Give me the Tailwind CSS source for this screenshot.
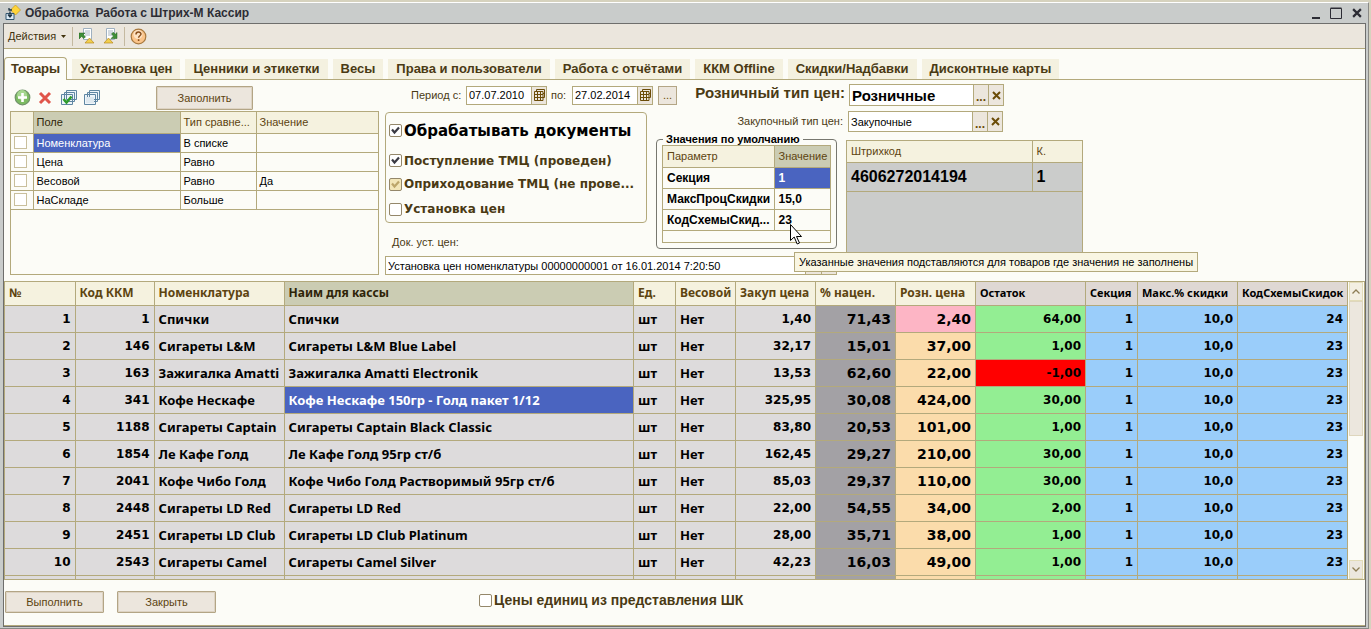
<!DOCTYPE html>
<html lang="ru">
<head>
<meta charset="utf-8">
<title>Обработка Работа с Штрих-М Кассир</title>
<script src="https://cdn.jsdelivr.net/npm/@tailwindcss/browser@4"></script>
</head>
<body class="h-screen overflow-hidden bg-[#d6d2be] pt-[2px] pr-[2px] font-['Liberation_Sans',sans-serif] text-[11px] leading-[14px] text-[#4a3a14]">
<svg class="hidden">
  <symbol id="tick" viewBox="0 0 13 13"><path d="M3 5.5 L5.5 8.5 L10 3.5" fill="none" stroke="currentColor" stroke-width="2.2"/></symbol>
  <symbol id="calendar" viewBox="0 0 12 12"><path d="M3.500 2V.5h8v8H10M2 2.500h8v9H1.500v-9zM1.500 5.500h8.500M1.500 8.500h8.500M4.500 2.500v9M7.500 2.500v9M10 4.500h1.500" fill="none" stroke="currentColor"/></symbol>
  <symbol id="cross" viewBox="0 0 9 9"><path d="M1 1l7 7M8 1l-7 7" stroke="currentColor" stroke-width="2"/></symbol>
</svg>
<div class="flex h-full flex-col border-t border-r border-b border-t-white border-r-[#8a8a86] border-b-[#8a8a86] bg-[#c9cccb] pr-[2px] pb-[1px] pl-[3px]">

  <header class="flex h-5 shrink-0 items-center pr-1 pl-[2px] text-[#2c2c34]">
    <svg class="mr-1 size-4" viewBox="0 0 16 16"><path d="M10.500 0l5 5-5 5-5-5z" fill="#ffd53a" stroke="#c99a18" stroke-width=".7"/><path d="M1 8.500v6h8v-6z" fill="#dcebf7" stroke="#33566e"/><path d="M4 3v2M7 5H3.500M5 6.500v5M3 9.500l2 2.500 2-2.500" fill="none" stroke="#1d3444" stroke-width="1.300"/></svg>
    <h1 class="text-[12px] font-bold whitespace-pre">Обработка  Работа с Штрих-М Кассир</h1>
    <div class="ml-auto flex items-center gap-2">
      <button aria-label="Свернуть"><svg class="size-3" viewBox="0 0 12 12"><path d="M2 11h8" stroke="currentColor" stroke-width="2"/></svg></button>
      <button aria-label="Развернуть"><svg class="size-3" viewBox="0 0 12 12"><path d="M.5 1.500h11v10H.5zM.5 1h11" fill="none" stroke="currentColor"/></svg></button>
      <button aria-label="Закрыть окно" class="pl-[2px]"><svg class="size-[10px]"><use href="#cross"/></svg></button>
    </div>
  </header>

  <div class="flex min-h-0 flex-1 flex-col border border-[#6e6e6c] bg-[#fcfcf7]">
    <div class="flex h-[25px] shrink-0 items-center border-b border-[#b3a97c] bg-[#ebe6dd] pl-1">
      <button class="flex items-center gap-[5px] text-[#40320c]">Действия <svg class="h-[3px] w-[5px]" viewBox="0 0 5 3"><path d="M0 0h5L2.500 3z" fill="currentColor"/></svg></button>
      <span class="mx-[6px] h-[19px] w-px bg-[#c4b9a0]"></span>
      <button aria-label="Загрузить" class="mr-2"><svg class="size-4" viewBox="0 0 16 16"><path d="M4.500.5h8v11h-8z" fill="#fff" stroke="#9fb0c0"/><path d="M6 3h5M6 5h5M6 7h5" stroke="#a9b5c1"/><path d="M0 5h6L4.300 6.700l2.200 2.100-1.700 1.700-2.200-2.100L0 11z" fill="#3f8f37" stroke="#215f20" stroke-width=".5"/><path d="M6 15l4.500-5L15 15z" fill="#f2cf4e" stroke="#b88a22" stroke-width=".7"/></svg></button>
      <button aria-label="Выгрузить"><svg class="size-4" viewBox="0 0 16 16"><path d="M3.500.5h8v11h-8z" fill="#fff" stroke="#9fb0c0"/><path d="M5 3h5M5 5h5M5 7h5" stroke="#a9b5c1"/><path d="M8 10.500h6v-6l-1.700 1.700-2-2-1.800 1.800 2 2z" fill="#3f8f37" stroke="#215f20" stroke-width=".5"/><path d="M1 15l4.500-5L10 15z" fill="#f2cf4e" stroke="#b88a22" stroke-width=".7"/></svg></button>
      <span class="mx-[5px] h-[19px] w-px bg-[#c4b9a0]"></span>
      <button aria-label="Справка"><svg class="size-[17px]" viewBox="0 0 17 17"><circle cx="8.500" cy="8.500" r="7.300" fill="#fac48a" stroke="#a8793f" stroke-width="1.200"/><circle cx="8" cy="6.500" r="4.500" fill="#fde3c4"/><path d="M6 6.500c0-3.200 5-3.200 5-.4 0 1.600-2.400 1.700-2.400 3.600M8.600 11.300v1.800" fill="none" stroke="#8a4f1c" stroke-width="1.500"/></svg></button>
    </div>

    <nav class="mt-2 flex h-[23px] shrink-0 items-end gap-[5px] border-b border-[#b3a97c] text-[13px] font-bold whitespace-nowrap">
      <a href="#" class="-mb-px flex h-[23px] items-center rounded-t-sm border border-b-0 border-[#b3a97c] bg-[#fcfcf7] px-[6px]">Товары</a>
      <a href="#" class="flex h-5 items-center bg-[#f4f1e0] px-2">Установка цен</a>
      <a href="#" class="flex h-5 items-center bg-[#f4f1e0] px-2">Ценники и этикетки</a>
      <a href="#" class="flex h-5 items-center bg-[#f4f1e0] px-2">Весы</a>
      <a href="#" class="flex h-5 items-center bg-[#f4f1e0] px-2">Права и пользователи</a>
      <a href="#" class="flex h-5 items-center bg-[#f4f1e0] px-2">Работа с отчётами</a>
      <a href="#" class="flex h-5 items-center bg-[#f4f1e0] px-2">ККМ Offline</a>
      <a href="#" class="flex h-5 items-center bg-[#f4f1e0] px-2">Скидки/Надбавки</a>
      <a href="#" class="flex h-5 items-center bg-[#f4f1e0] px-2">Дисконтные карты</a>
    </nav>

    <main class="flex h-[201px] shrink-0 pt-1 pb-[6px] pl-[6px]">
      <!-- Отбор -->
      <section class="mr-[6px] flex w-[369px] flex-col">
        <div class="flex h-[27px] shrink-0 items-center pl-1">
          <button aria-label="Добавить" class="mr-[7px]"><svg class="size-[17px]" viewBox="0 0 17 17"><circle cx="8.500" cy="8.500" r="7.300" fill="#7cbb62" stroke="#71936a" stroke-width="1.200"/><circle cx="8" cy="6" r="5" fill="#a5d68f"/><path d="M8.500 4v9M4 8.500h9" stroke="#fff" stroke-width="2.600"/></svg></button>
          <button aria-label="Удалить" class="mr-[9px]"><svg class="size-[14px]" viewBox="0 0 14 14"><path d="M2 2l10 10M12 2L2 12" stroke="#e0554a" stroke-width="3"/></svg></button>
          <button aria-label="Отметить все" class="mr-[7px]"><svg class="size-4" viewBox="0 0 16 16"><path d="M5.500.5h10v9h-10zM3.500 2.500h10v9h-10zM.5 4.500h11v10H.5z" fill="#eef5fa" stroke="#5f86a2"/><path d="M2.500 9l3 3.500 5-6" fill="none" stroke="#2f9c2c" stroke-width="2.600"/></svg></button>
          <button aria-label="Снять отметки"><svg class="size-4" viewBox="0 0 16 16"><path d="M5.500.5h10v9h-10zM3.500 2.500h10v9h-10zM.5 4.500h11v10H.5z" fill="#eef5fa" stroke="#5f86a2"/><path d="M2 7h8v6H2z" fill="#dfe9ef"/></svg></button>
          <button class="ml-14 h-6 w-[97px] rounded-[1px] border border-[#b3a585] bg-[#ece6dd] text-[#5d4410] shadow-[inset_0_0_0_1px_#ddd3c3]">Заполнить</button>
        </div>
        <div class="flex-1 border border-[#b3a97c]">
          <table class="w-full table-fixed border-collapse text-black [&_td]:h-[19px] [&_td]:border-b [&_td]:border-[#b3a97c] [&_td]:p-0 [&_td]:pl-[3px] [&_td:not(:last-child)]:border-r [&_th]:h-[21px] [&_th]:border-b [&_th]:border-[#b3a97c] [&_th]:p-0 [&_th]:pl-[3px] [&_th]:text-left [&_th]:font-normal [&_th:not(:last-child)]:border-r [&_input]:block [&_input]:size-[13px] [&_input]:appearance-none [&_input]:border [&_input]:border-[#c9bf9c] [&_input]:bg-white">
            <thead class="bg-[#f5f2df] text-[#5d4410]"><tr>
              <th class="w-[22px]"></th><th class="w-[147px] bg-[#cbccb3] text-[#2f2408]">Поле</th><th class="w-[76px]">Тип сравне...</th><th>Значение</th></tr></thead>
            <tbody>
              <tr><td><input type="checkbox" aria-label="Номенклатура"></td><td class="bg-[#4a64c0] text-white">Номенклатура</td><td>В списке</td><td></td></tr>
              <tr><td><input type="checkbox" aria-label="Цена"></td><td>Цена</td><td>Равно</td><td></td></tr>
              <tr><td><input type="checkbox" aria-label="Весовой"></td><td>Весовой</td><td>Равно</td><td>Да</td></tr>
              <tr><td><input type="checkbox" aria-label="НаСкладе"></td><td>НаСкладе</td><td>Больше</td><td></td></tr>
            </tbody>
          </table>
        </div>
      </section>

      <!-- Период, документы и значения по умолчанию -->
      <section class="mr-[9px] flex w-[452px] flex-col">
        <div class="flex flex-1">
          <div class="flex w-[262px] flex-col">
            <div class="flex h-[22px] items-center pl-[26px] whitespace-nowrap [&>*]:shrink-0">
              <label for="from" class="mr-1 w-[51px]">Период с:</label>
              <input id="from" value="07.07.2010" class="h-[19px] w-[66px] border border-[#b3a97c] bg-white pl-[2px] text-[11px] text-black">
              <button aria-label="Выбрать начало" class="flex h-[19px] w-[15px] items-center justify-center border border-l-0 border-[#b3a97c] bg-[#ece6dd] text-[#6b4c08]"><svg class="size-3 shrink-0"><use href="#calendar"/></svg></button>
              <label for="to" class="mr-1 ml-1 w-[17px]">по:</label>
              <input id="to" value="27.02.2014" class="h-[19px] w-[66px] border border-[#b3a97c] bg-white pl-[2px] text-[11px] text-black">
              <button aria-label="Выбрать конец" class="flex h-[19px] w-[15px] items-center justify-center border border-l-0 border-[#b3a97c] bg-[#ece6dd] text-[#6b4c08]"><svg class="size-3 shrink-0"><use href="#calendar"/></svg></button>
              <button aria-label="Выбрать период" class="ml-[5px] h-[19px] w-[19px] border border-[#b3a585] bg-[#ece6dd] leading-3 text-[#6b4c08]">...</button>
            </div>
            <div class="mt-[6px] flex h-[111px] flex-col rounded-[4px] border border-[#b3a97c] pt-2 pl-[3px] font-['DejaVu_Sans',sans-serif] text-[12px] font-bold whitespace-nowrap [&_label]:flex [&_label]:items-center [&_label]:gap-[2px] [&_label>span]:grid [&_input]:col-start-1 [&_input]:row-start-1 [&_input]:size-[13px] [&_input]:appearance-none [&_input]:rounded-[2px] [&_input]:border [&_input]:border-[#94876a] [&_svg]:col-start-1 [&_svg]:row-start-1 [&_svg]:size-[13px]">
              <label class="h-5 text-[15px] text-black"><span><input type="checkbox" checked class="bg-white"><svg class="text-[#3a3a44]"><use href="#tick"/></svg></span>Обрабатывать документы</label>
              <label class="mt-2 h-6"><span><input type="checkbox" checked class="bg-white"><svg class="text-[#3a3a44]"><use href="#tick"/></svg></span>Поступление ТМЦ (проведен)</label>
              <label class="h-6"><span><input type="checkbox" checked disabled class="bg-[#f3e6b8]"><svg class="text-[#bda66a]"><use href="#tick"/></svg></span>Оприходование ТМЦ (не прове...</label>
              <label class="h-[26px]"><span><input type="checkbox" class="bg-white"></span>Установка цен</label>
            </div>
            <label for="doc" class="mt-3 pl-[7px]">Док. уст. цен:</label>
          </div>
          <div class="ml-[9px] flex flex-1 flex-col">
            <label for="retail" class="-mr-[8px] h-[22px] self-end text-[15px] leading-[18px] font-bold whitespace-nowrap">Розничный тип цен:</label>
            <label for="purchase" class="-mr-[6px] mt-[8px] h-[15px] self-end whitespace-nowrap">Закупочный тип цен:</label>
            <fieldset class="mt-[4px] h-[116px] rounded-[4px] border border-[#77776f] px-[5px] text-black">
              <legend class="ml-px px-[3px] text-[11px] leading-[12px] font-bold whitespace-nowrap">Значения по умолчанию</legend>
              <div class="h-[98px] border border-[#b3a97c]">
                <table class="w-full table-fixed border-collapse text-[12px] font-bold [&_td]:h-[21px] [&_td]:border-b [&_td]:border-[#b3a97c] [&_td]:p-0 [&_td]:pl-1 [&_td:first-child]:border-r [&_th]:h-[21px] [&_th]:border-b [&_th]:border-[#b3a97c] [&_th]:p-0 [&_th]:pl-1 [&_th]:text-left [&_th]:text-[11px] [&_th]:font-normal [&_th]:text-[#5d4410] [&_th:first-child]:border-r">
                  <thead><tr><th class="w-[111px] bg-[#f5f2df]">Параметр</th><th class="bg-[#cbccb3]">Значение</th></tr></thead>
                  <tbody>
                    <tr><td>Секция</td><td class="bg-[#4a64c0] text-white">1</td></tr>
                    <tr><td>МаксПроцСкидки</td><td>15,0</td></tr>
                    <tr><td>КодСхемыСкид...</td><td>23</td></tr>
                  </tbody>
                </table>
              </div>
            </fieldset>
          </div>
        </div>
        <div class="flex h-[19px] shrink-0">
          <input id="doc" value="Установка цен номенклатуры 00000000001 от 16.01.2014 7:20:50" class="min-w-0 flex-1 border border-[#b3a97c] bg-white pl-[2px] text-[11px] text-black">
          <button aria-label="Выбрать документ" class="w-4 border border-l-0 border-[#b3a97c] bg-[#ece6dd]"></button>
          <button aria-label="Очистить документ" class="w-[15px] border border-l-0 border-[#b3a97c] bg-[#ece6dd]"></button>
        </div>
      </section>

      <!-- Типы цен и штрихкоды -->
      <section class="relative flex flex-1 flex-col items-start">
        <div class="ml-[3px] flex h-[22px] w-[155px]">
          <input id="retail" value="Розничные" class="min-w-0 flex-1 border border-[#b3a97c] bg-white pl-[2px] text-[15px] font-bold text-black">
          <button aria-label="Выбрать розничный тип" class="w-[15px] border border-l-0 border-[#b3a97c] bg-[#ece6dd] pt-1 text-[12px] font-bold text-[#6b4c08]">...</button>
          <button aria-label="Очистить розничный тип" class="flex w-[15px] items-center justify-center border border-l-0 border-[#b3a97c] bg-[#ece6dd] text-[#6b4c08]"><svg class="size-[9px]"><use href="#cross"/></svg></button>
        </div>
        <div class="mt-[5px] ml-[2px] flex h-[21px] w-[155px]">
          <input id="purchase" value="Закупочные" class="min-w-0 flex-1 border border-[#b3a97c] bg-white pl-[2px] text-[11px] text-black">
          <button aria-label="Выбрать закупочный тип" class="w-[15px] border border-l-0 border-[#b3a97c] bg-[#ece6dd] pt-1 text-[12px] font-bold text-[#6b4c08]">...</button>
          <button aria-label="Очистить закупочный тип" class="flex w-[15px] items-center justify-center border border-l-0 border-[#b3a97c] bg-[#ece6dd] text-[#6b4c08]"><svg class="size-[9px]"><use href="#cross"/></svg></button>
        </div>
        <div class="mt-2 h-[120px] w-[237px] border border-[#b3a97c] bg-[#cbcccb]">
          <table class="w-full table-fixed border-collapse [&_td]:border-b [&_td]:border-[#b3a97c] [&_td:first-child]:border-r [&_th]:border-b [&_th]:border-[#b3a97c] [&_th:first-child]:border-r">
            <thead><tr class="h-[21px] bg-[#f5f2df] text-left text-[#5d4410]"><th class="w-[185px] p-0 pl-1 font-normal">Штрихкод</th><th class="p-0 pl-1 font-normal">К.</th></tr></thead>
            <tbody><tr class="h-[29px] text-[16px] font-bold text-black"><td class="p-0 pl-1">4606272014194</td><td class="p-0 pl-1">1</td></tr></tbody>
          </table>
        </div>
        <div role="tooltip" class="absolute top-[168px] -left-[52px] z-10 flex h-5 items-center border border-[#b3a97c] bg-[#f9f6e3] px-1 whitespace-nowrap text-black">Указанные значения подставляются для товаров где значения не заполнены</div>
        <svg class="absolute top-[140px] -left-[56px] z-20 h-[21px] w-3" viewBox="0 0 12 21"><path d="M.5.5v16l3.700-3.500 3 7 2.300-1-3-6.500h5z" fill="#fff" stroke="#000"/></svg>
      </section>
    </main>

    <!-- Товары -->
    <div class="flex min-h-0 flex-1 overflow-hidden border border-[#b3a97c]">
      <div class="min-w-0 flex-1 overflow-hidden">
        <table class="w-full table-fixed border-collapse font-['Comic_Sans_MS','Noto_Sans',sans-serif] text-[13px] leading-[18px] font-bold whitespace-nowrap text-black [&_td]:h-[27px] [&_td]:border-r [&_td]:border-b [&_td]:border-[#b3a97c] [&_td]:p-0 [&_td]:px-1 [&_th]:h-[23px] [&_th]:border-r [&_th]:border-b [&_th]:border-[#b3a97c] [&_th]:p-0 [&_th]:pl-1 [&_th]:text-left">
          <thead class="bg-[#f5f2df] text-[12px] text-[#5d4410]"><tr>
            <th class="w-[70px]">№</th><th class="w-[79px]">Код ККМ</th><th class="w-[130px]">Номенклатура</th><th class="bg-[#cbccb3] text-[#2f2408]">Наим для кассы</th><th class="w-[42px]">Ед.</th><th class="w-[60px]">Весовой</th><th class="w-[80px]">Закуп цена</th><th class="w-[80px]">% нацен.</th><th class="w-[80px]">Розн. цена</th><th class="w-[110px] bg-[#dfd8d4] text-[11px] text-black">Остаток</th><th class="w-[52px] bg-[#dfd8d4] text-[11px] text-black">Секция</th><th class="w-[100px] bg-[#dfd8d4] text-[11px] text-black">Макс.% скидки</th><th class="w-[110px] bg-[#dfd8d4] text-[11px] text-black">КодСхемыСкидок</th>
          </tr></thead>
          <tbody id="goods"></tbody>
        </table>
      </div>
      <div class="flex w-4 shrink-0 flex-col items-center bg-[#fcfcf7] text-[#8d7d55]">
        <button aria-label="Вверх" class="flex h-[19px] w-[14px] items-center justify-center border border-[#e3dcb8] bg-[#f3efe2]"><svg class="h-[5px] w-2" viewBox="0 0 8 5"><path d="M.5 4.500L4 1l3.500 3.500" fill="none" stroke="currentColor" stroke-width="1.300"/></svg></button>
        <div class="h-[135px] w-[14px] border border-[#ded6bd] bg-[#ece7de]"></div>
        <button aria-label="Вниз" class="mt-auto flex h-[19px] w-[14px] items-center justify-center border border-[#e3dcb8] bg-[#ece7de]"><svg class="h-[5px] w-2" viewBox="0 0 8 5"><path d="M.5.5L4 4 7.500.5" fill="none" stroke="currentColor" stroke-width="1.300"/></svg></button>
      </div>
    </div>

    <footer class="flex h-[46px] shrink-0 items-start border-b border-[#b3a97c] pt-[11px] pl-px">
      <button class="h-[22px] w-[99px] rounded-[1px] border border-[#b3a585] bg-[#ece6dd] text-[#5d4410] shadow-[inset_0_0_0_1px_#ddd3c3]">Выполнить</button>
      <button class="ml-[13px] h-[22px] w-[99px] rounded-[1px] border border-[#b3a585] bg-[#ece6dd] text-[#5d4410] shadow-[inset_0_0_0_1px_#ddd3c3]">Закрыть</button>
      <label class="ml-[263px] flex h-[18px] items-center gap-[2px] text-[14px] font-bold"><input type="checkbox" class="size-[13px] appearance-none rounded-[2px] border border-[#94876a] bg-white">Цены единиц из представления ШК</label>
    </footer>
  </div>
</div>
<script>
const goods = [
  ['1','Спички','Спички','1,40','71,43','2,40','64,00','24'],
  ['146','Сигареты L&amp;M','Сигареты L&amp;M Blue Label','32,17','15,01','37,00','1,00','23'],
  ['163','Зажигалка Amatti','Зажигалка Amatti Electronik','13,53','62,60','22,00','-1,00','23'],
  ['341','Кофе Нескафе','Кофе Нескафе 150гр - Голд пакет 1/12','325,95','30,08','424,00','30,00','23'],
  ['1188','Сигареты Captain','Сигареты Captain Black Classic','83,80','20,53','101,00','1,00','23'],
  ['1854','Ле Кафе Голд','Ле Кафе Голд 95гр ст/б','162,45','29,27','210,00','30,00','23'],
  ['2041','Кофе Чибо Голд','Кофе Чибо Голд Растворимый 95гр ст/б','85,03','29,37','110,00','30,00','23'],
  ['2448','Сигареты LD Red','Сигареты LD Red','22,00','54,55','34,00','2,00','23'],
  ['2451','Сигареты LD Club','Сигареты LD Club Platinum','28,00','35,71','38,00','1,00','23'],
  ['2543','Сигареты Camel','Сигареты Camel Silver','42,23','16,03','49,00','1,00','23'],
];
const num = "text-right font-['DejaVu_Sans',sans-serif] text-[12px]";
const big = "text-right font-['DejaVu_Sans',sans-serif] text-[14px]";
const row = (g, i) => `<tr class="bg-[#dddbdc]">
  <td class="${num}">${g ? i + 1 : ''}</td><td class="${num}">${g ? g[0] : ''}</td><td>${g ? g[1] : ''}</td>
  <td class="${i === 3 ? 'bg-[#4a64c0] text-white' : ''}">${g ? g[2] : ''}</td><td>${g ? 'шт' : ''}</td><td>${g ? 'Нет' : ''}</td>
  <td class="${num}">${g ? g[3] : ''}</td><td class="bg-[#a3a1a5] ${big}">${g ? g[4] : ''}</td>
  <td class="${i === 0 ? 'bg-[#fdb5c5]' : 'bg-[#fbdcab]'} ${big}">${g ? g[5] : ''}</td>
  <td class="${i === 2 ? 'bg-[#ff0000]' : 'bg-[#93ee93]'} ${num}">${g ? g[6] : ''}</td>
  <td class="bg-[#9acdfa] ${num}">${g ? '1' : ''}</td><td class="bg-[#9acdfa] ${num}">${g ? '10,0' : ''}</td><td class="bg-[#9acdfa] ${num}">${g ? g[7] : ''}</td></tr>`;
document.getElementById('goods').innerHTML = [...goods, null].map(row).join('');
</script>
</body>
</html>
